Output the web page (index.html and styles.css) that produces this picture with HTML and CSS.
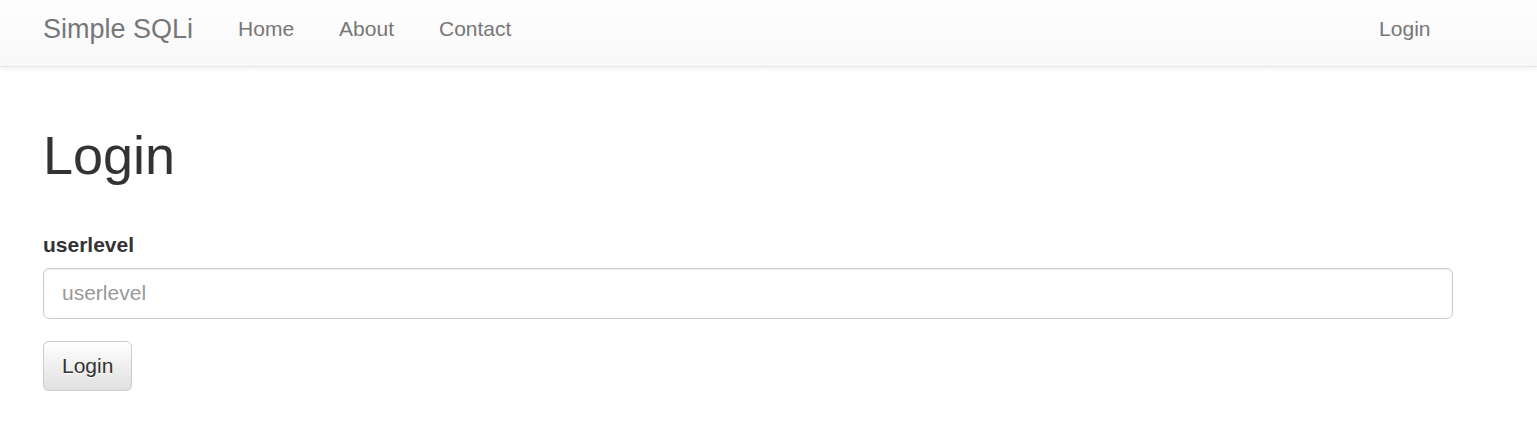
FILE: index.html
```html
<!DOCTYPE html>
<html>
<head>
<meta charset="utf-8">
<title>Simple SQLi</title>
<link rel="stylesheet" href="styles.css">
</head>
<body>
<nav class="navbar">
  <div class="container nav-inner">
    <a class="brand" href="#">Simple SQLi</a>
    <ul class="nav">
      <li><a href="#">Home</a></li>
      <li><a href="#">About</a></li>
      <li><a href="#">Contact</a></li>
    </ul>
    <ul class="nav nav-right">
      <li><a href="#">Login</a></li>
    </ul>
  </div>
</nav>
<main class="container">
  <h1 class="title">Login</h1>
  <form class="form">
    <div class="form-group">
      <label class="label" for="userlevel">userlevel</label>
      <input class="input" id="userlevel" type="text" placeholder="userlevel">
    </div>
    <button class="btn" type="button">Login</button>
  </form>
</main>
</body>
</html>
```
FILE: styles.css
```css
* { box-sizing: border-box; }
html, body { margin: 0; padding: 0; }
body {
  font-family: "Liberation Sans", Arial, Helvetica, sans-serif;
  font-size: 21px;
  line-height: 1.42857;
  color: #333;
  background: #fff;
}
.container {
  width: 1410px;
  margin-left: 43px;
}
.navbar {
  height: 67px;
  background: linear-gradient(to bottom, #fefefe 0%, #f8f8f8 100%);
  border-bottom: 1px solid #e7e7e7;
  box-shadow: 0 1px 6px rgba(0,0,0,0.075);
}
.nav-inner {
  display: flex;
  align-items: flex-start;
}
.brand {
  display: block;
  font-size: 27px;
  line-height: 30px;
  padding-top: 14px;
  padding-right: 22.5px;
  color: #777;
  text-decoration: none;
}
.nav {
  display: flex;
  list-style: none;
  margin: 0;
  padding: 0;
}
.nav a {
  display: block;
  padding: 14px 22.5px 0;
  line-height: 30px;
  font-size: 21px;
  color: #777;
  text-decoration: none;
}
.nav-right { margin-left: auto; }
.title {
  font-size: 54px;
  font-weight: 500;
  line-height: 1.1;
  margin: 59px 0 45px;
  color: #333;
}
.form { margin: 0; }
.form-group { margin-bottom: 22px; }
.label {
  display: block;
  font-weight: bold;
  font-size: 21px;
  line-height: 30px;
  margin-bottom: 7.5px;
}
.input {
  display: block;
  width: 100%;
  height: 51px;
  padding: 9px 18px;
  font-family: inherit;
  font-size: 21px;
  line-height: 30px;
  color: #555;
  background: #fff;
  border: 1px solid #ccc;
  border-radius: 6px;
  box-shadow: inset 0 1px 1px rgba(0,0,0,0.075);
}
.input::placeholder { color: #999; opacity: 1; }
.btn {
  display: block;
  height: 50px;
  padding: 9px 18px;
  font-family: inherit;
  font-size: 21px;
  line-height: 30px;
  color: #333;
  background: linear-gradient(to bottom, #fff 0%, #e0e0e0 100%);
  border: 1px solid #ccc;
  border-radius: 6px;
  box-shadow: inset 0 1px 0 rgba(255,255,255,0.15), 0 1px 1px rgba(0,0,0,0.075);
  text-shadow: 0 1px 0 #fff;
}
```
